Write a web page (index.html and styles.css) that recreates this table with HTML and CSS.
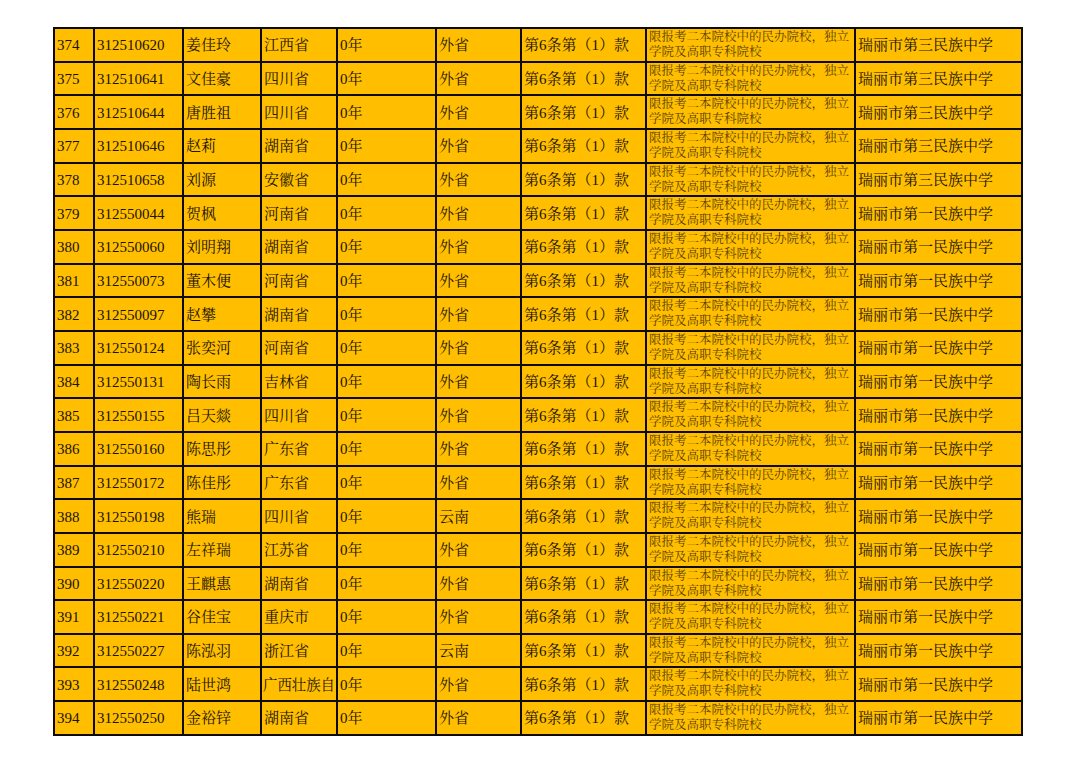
FILE: index.html
```html
<!DOCTYPE html>
<html lang="zh">
<head>
<meta charset="utf-8">
<link rel="stylesheet" href="styles.css">
</head>
<body>
<div class="page">
<table class="sheet">
<colgroup>
<col class="c1"><col class="c2"><col class="c3"><col class="c4"><col class="c5"><col class="c6"><col class="c7"><col class="c8"><col class="c9">
</colgroup>
<tbody>
<tr><td>374</td><td>312510620</td><td>姜佳玲</td><td>江西省</td><td>0年</td><td>外省</td><td>第6条第（1）款</td><td class="note">限报考二本院校中的民办院校，独立<br>学院及高职专科院校</td><td>瑞丽市第三民族中学</td></tr>
<tr><td>375</td><td>312510641</td><td>文佳豪</td><td>四川省</td><td>0年</td><td>外省</td><td>第6条第（1）款</td><td class="note">限报考二本院校中的民办院校，独立<br>学院及高职专科院校</td><td>瑞丽市第三民族中学</td></tr>
<tr><td>376</td><td>312510644</td><td>唐胜祖</td><td>四川省</td><td>0年</td><td>外省</td><td>第6条第（1）款</td><td class="note">限报考二本院校中的民办院校，独立<br>学院及高职专科院校</td><td>瑞丽市第三民族中学</td></tr>
<tr><td>377</td><td>312510646</td><td>赵莉</td><td>湖南省</td><td>0年</td><td>外省</td><td>第6条第（1）款</td><td class="note">限报考二本院校中的民办院校，独立<br>学院及高职专科院校</td><td>瑞丽市第三民族中学</td></tr>
<tr><td>378</td><td>312510658</td><td>刘源</td><td>安徽省</td><td>0年</td><td>外省</td><td>第6条第（1）款</td><td class="note">限报考二本院校中的民办院校，独立<br>学院及高职专科院校</td><td>瑞丽市第三民族中学</td></tr>
<tr><td>379</td><td>312550044</td><td>贺枫</td><td>河南省</td><td>0年</td><td>外省</td><td>第6条第（1）款</td><td class="note">限报考二本院校中的民办院校，独立<br>学院及高职专科院校</td><td>瑞丽市第一民族中学</td></tr>
<tr><td>380</td><td>312550060</td><td>刘明翔</td><td>湖南省</td><td>0年</td><td>外省</td><td>第6条第（1）款</td><td class="note">限报考二本院校中的民办院校，独立<br>学院及高职专科院校</td><td>瑞丽市第一民族中学</td></tr>
<tr><td>381</td><td>312550073</td><td>董木便</td><td>河南省</td><td>0年</td><td>外省</td><td>第6条第（1）款</td><td class="note">限报考二本院校中的民办院校，独立<br>学院及高职专科院校</td><td>瑞丽市第一民族中学</td></tr>
<tr><td>382</td><td>312550097</td><td>赵攀</td><td>湖南省</td><td>0年</td><td>外省</td><td>第6条第（1）款</td><td class="note">限报考二本院校中的民办院校，独立<br>学院及高职专科院校</td><td>瑞丽市第一民族中学</td></tr>
<tr><td>383</td><td>312550124</td><td>张奕河</td><td>河南省</td><td>0年</td><td>外省</td><td>第6条第（1）款</td><td class="note">限报考二本院校中的民办院校，独立<br>学院及高职专科院校</td><td>瑞丽市第一民族中学</td></tr>
<tr><td>384</td><td>312550131</td><td>陶长雨</td><td>吉林省</td><td>0年</td><td>外省</td><td>第6条第（1）款</td><td class="note">限报考二本院校中的民办院校，独立<br>学院及高职专科院校</td><td>瑞丽市第一民族中学</td></tr>
<tr><td>385</td><td>312550155</td><td>吕天燚</td><td>四川省</td><td>0年</td><td>外省</td><td>第6条第（1）款</td><td class="note">限报考二本院校中的民办院校，独立<br>学院及高职专科院校</td><td>瑞丽市第一民族中学</td></tr>
<tr><td>386</td><td>312550160</td><td>陈思彤</td><td>广东省</td><td>0年</td><td>外省</td><td>第6条第（1）款</td><td class="note">限报考二本院校中的民办院校，独立<br>学院及高职专科院校</td><td>瑞丽市第一民族中学</td></tr>
<tr><td>387</td><td>312550172</td><td>陈佳彤</td><td>广东省</td><td>0年</td><td>外省</td><td>第6条第（1）款</td><td class="note">限报考二本院校中的民办院校，独立<br>学院及高职专科院校</td><td>瑞丽市第一民族中学</td></tr>
<tr><td>388</td><td>312550198</td><td>熊瑞</td><td>四川省</td><td>0年</td><td>云南</td><td>第6条第（1）款</td><td class="note">限报考二本院校中的民办院校，独立<br>学院及高职专科院校</td><td>瑞丽市第一民族中学</td></tr>
<tr><td>389</td><td>312550210</td><td>左祥瑞</td><td>江苏省</td><td>0年</td><td>外省</td><td>第6条第（1）款</td><td class="note">限报考二本院校中的民办院校，独立<br>学院及高职专科院校</td><td>瑞丽市第一民族中学</td></tr>
<tr><td>390</td><td>312550220</td><td>王麒惠</td><td>湖南省</td><td>0年</td><td>外省</td><td>第6条第（1）款</td><td class="note">限报考二本院校中的民办院校，独立<br>学院及高职专科院校</td><td>瑞丽市第一民族中学</td></tr>
<tr><td>391</td><td>312550221</td><td>谷佳宝</td><td>重庆市</td><td>0年</td><td>外省</td><td>第6条第（1）款</td><td class="note">限报考二本院校中的民办院校，独立<br>学院及高职专科院校</td><td>瑞丽市第一民族中学</td></tr>
<tr><td>392</td><td>312550227</td><td>陈泓羽</td><td>浙江省</td><td>0年</td><td>云南</td><td>第6条第（1）款</td><td class="note">限报考二本院校中的民办院校，独立<br>学院及高职专科院校</td><td>瑞丽市第一民族中学</td></tr>
<tr><td>393</td><td>312550248</td><td>陆世鸿</td><td class="tight">广西壮族自</td><td>0年</td><td>外省</td><td>第6条第（1）款</td><td class="note">限报考二本院校中的民办院校，独立<br>学院及高职专科院校</td><td>瑞丽市第一民族中学</td></tr>
<tr><td>394</td><td>312550250</td><td>金裕锌</td><td>湖南省</td><td>0年</td><td>外省</td><td>第6条第（1）款</td><td class="note">限报考二本院校中的民办院校，独立<br>学院及高职专科院校</td><td>瑞丽市第一民族中学</td></tr>
</tbody>
</table>
</div>
</body>
</html>
```

FILE: styles.css
```css
html, body {
  margin: 0;
  padding: 0;
  background: #ffffff;
}
.page {
  padding: 27px 0 0 53px;
}
.sheet {
  table-layout: fixed;
  width: 970px;
  border-collapse: separate;
  border-spacing: 2px;
  background: #0e0b05;
  font-family: "Liberation Serif", "Noto Serif CJK SC", "Noto Sans CJK SC", serif;
  font-size: 15px;
  color: #1c1300;
}
.c1 { width: 38px; }
.c2 { width: 87px; }
.c3 { width: 76px; }
.c4 { width: 74px; }
.c5 { width: 97px; }
.c6 { width: 83px; }
.c7 { width: 123px; }
.c8 { width: 207px; }
.c9 { width: 165px; }
.sheet tr {
  height: 31.67px;
}
.sheet td {
  background: #ffbf00;
  padding: 1px 0 0 2px;
  vertical-align: middle;
  white-space: nowrap;
  overflow: hidden;
  line-height: 18px;
}
.sheet td.tight {
  font-size: 14.4px;
  padding-left: 1px;
}
.sheet td.note {
  font-size: 12.5px;
  line-height: 15px;
  color: #5e3f00;
  vertical-align: top;
  padding-top: 1px;
}
```
